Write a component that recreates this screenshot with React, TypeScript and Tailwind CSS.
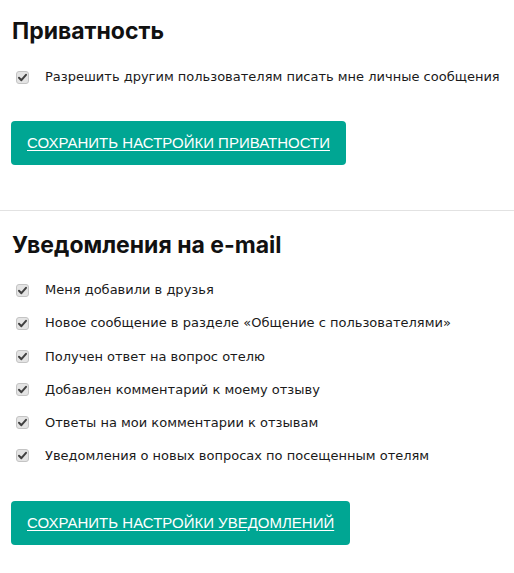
import React from "react";

function Check({ label }: { label: string }) {
  return (
    <div className="flex items-center h-[20px]">
      <div className="ml-[4px] w-[13px] h-[13px] rounded-[3px] bg-[#e4e4e4] border border-[#c4c4c4] flex items-center justify-center shrink-0">
        <svg width="11" height="11" viewBox="0 0 11 11">
          <path d="M2 5.8 L4.4 8.2 L9 2.8" fill="none" stroke="#404040" strokeWidth="2" strokeLinecap="round" strokeLinejoin="round" />
        </svg>
      </div>
      <span className="ml-[16px] text-[13px] text-[#1a1a1a] whitespace-nowrap" style={{ fontFamily: '"DejaVu Sans", Verdana, sans-serif' }}>
        {label}
      </span>
    </div>
  );
}

function Btn({ label }: { label: string }) {
  return (
    <button
      className="h-[44px] px-[16px] rounded-[4px] bg-[#00a693] text-white text-[15px] underline underline-offset-2 whitespace-nowrap"
      style={{ fontFamily: '"Liberation Sans", Arial, sans-serif' }}
    >
      {label}
    </button>
  );
}

export default function App() {
  return (
    <div className="w-[514px] h-[573px] bg-white overflow-hidden" style={{ fontFamily: '"Liberation Sans", Arial, sans-serif' }}>
      <div className="pl-[12px] pt-[17px]">
        <h2 className="text-[23px] leading-[28px] font-bold text-[#111]" style={{ fontFamily: 'Inter, "Noto Sans", sans-serif' }}>
          Приватность
        </h2>
        <div className="mt-[22px]">
          <Check label="Разрешить другим пользователям писать мне личные сообщения" />
        </div>
        <div className="mt-[34px] -ml-[1px]">
          <Btn label="СОХРАНИТЬ НАСТРОЙКИ ПРИВАТНОСТИ" />
        </div>
      </div>
      <div className="mt-[45px] h-px bg-[#e2e2e2]" />
      <div className="pl-[12px] pt-[20px]">
        <h2 className="text-[23px] leading-[28px] font-bold text-[#111]" style={{ fontFamily: 'Inter, "Noto Sans", sans-serif' }}>
          Уведомления на e-mail
        </h2>
        <div className="mt-[21px] flex flex-col gap-[13.2px]">
          <Check label="Меня добавили в друзья" />
          <Check label="Новое сообщение в разделе «Общение с пользователями»" />
          <Check label="Получен ответ на вопрос отелю" />
          <Check label="Добавлен комментарий к моему отзыву" />
          <Check label="Ответы на мои комментарии к отзывам" />
          <Check label="Уведомления о новых вопросах по посещенным отелям" />
        </div>
        <div className="mt-[35px] -ml-[1px]">
          <Btn label="СОХРАНИТЬ НАСТРОЙКИ УВЕДОМЛЕНИЙ" />
        </div>
      </div>
    </div>
  );
}
